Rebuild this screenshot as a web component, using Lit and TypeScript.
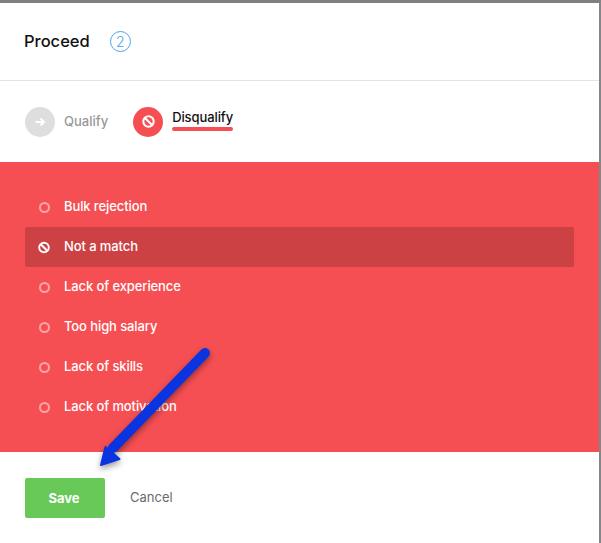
import { LitElement, html, css, svg } from 'lit';
import { customElement } from 'lit/decorators.js';

const REASONS = [
  { label: 'Bulk rejection' },
  { label: 'Not a match', active: true },
  { label: 'Lack of experience' },
  { label: 'Too high salary' },
  { label: 'Lack of skills' },
  { label: 'Lack of motivation' },
];

const banIcon = (size: number) => html`
  <svg width=${size} height=${size} viewBox="0 0 14 14" fill="none" stroke="#fff" stroke-width="2.2">
    <circle cx="7" cy="7" r="5.6"></circle>
    <path d="M3.2 3.2l7.6 7.6"></path>
  </svg>
`;

@customElement('app-root')
export class AppRoot extends LitElement {
  static styles = css`
    :host {
      display: block;
      position: relative;
      width: 601px;
      height: 543px;
      overflow: hidden;
      background: #fff;
      font-family: 'Inter', 'Noto Sans', sans-serif;
      -webkit-font-smoothing: antialiased;
    }
    .dialog {
      width: 601px;
      height: 543px;
      box-sizing: border-box;
      border-top: 3px solid #7f7f7f;
      border-right: 2px solid #85868a;
      display: flex;
      flex-direction: column;
    }
    .head {
      height: 78px;
      flex: none;
      box-sizing: border-box;
      border-bottom: 1px solid #e4e4e4;
      padding: 0 24px;
      display: flex;
      align-items: center;
      gap: 20px;
    }
    .title {
      font-size: 16.5px;
      font-weight: 500;
      color: #111;
      padding-bottom: 2px;
    }
    .count {
      width: 21px;
      height: 21px;
      box-sizing: border-box;
      border: 1px solid #4aa3f0;
      border-radius: 50%;
      color: #4aa3f0;
      font-size: 14px;
      font-weight: 300;
      display: flex;
      align-items: center;
      justify-content: center;
    }
    .tabs {
      height: 81px;
      flex: none;
      box-sizing: border-box;
      padding: 0 25px;
      display: flex;
      align-items: center;
      gap: 25px;
    }
    .tab {
      display: flex;
      align-items: center;
      gap: 9px;
      font-size: 13px;
      font-weight: 500;
    }
    .badge {
      width: 30px;
      height: 30px;
      border-radius: 50%;
      display: flex;
      align-items: center;
      justify-content: center;
    }
    .tab.off { color: #999; }
    .tab.off .badge { background: #dedede; }
    .tab.off .name { padding-bottom: 2px; }
    .tab.on { color: #111; }
    .tab.on .badge { background: #f64f53; }
    .tab.on .name {
      position: relative;
      margin-top: -3px;
      padding-bottom: 6px;
      letter-spacing: -0.1px;
    }
    .tab.on .name::after {
      content: '';
      position: absolute;
      left: 0;
      right: 0;
      bottom: 0;
      height: 4px;
      border-radius: 2px;
      background: #f64f53;
    }
    .reasons {
      height: 290px;
      flex: none;
      box-sizing: border-box;
      background: #f64f53;
      padding: 25px 25px 0;
      display: flex;
      flex-direction: column;
    }
    .reason {
      height: 40px;
      flex: none;
      padding-left: 13px;
      display: flex;
      align-items: center;
      gap: 14px;
      color: #fff;
      font-size: 13px;
      font-weight: 500;
      letter-spacing: -0.1px;
      border-radius: 2px;
    }
    .reason.active { background: #cc4244; }
    .label { padding-bottom: 2px; }
    .mark {
      width: 12px;
      display: flex;
      justify-content: center;
    }
    .dot {
      width: 11px;
      height: 11px;
      flex: none;
      box-sizing: border-box;
      border: 2px solid #fba6a8;
      border-radius: 50%;
    }
    .foot {
      flex: 1;
      padding: 26px 25px 0;
      display: flex;
      align-items: flex-start;
      gap: 25px;
    }
    .save {
      width: 80px;
      height: 40px;
      border: none;
      border-radius: 2px;
      padding: 0 2px 0 0;
      background: #68c959;
      color: #fff;
      font: 700 13px 'Inter', 'Noto Sans', sans-serif;
    }
    .cancel {
      height: 37px;
      display: flex;
      align-items: center;
      color: #6b6b6b;
      font-size: 13px;
    }
    .arrow {
      position: absolute;
      left: 90px;
      top: 340px;
      filter: drop-shadow(0 3px 3px rgba(0, 0, 0, 0.4));
    }
  `;

  render() {
    return html`
      <div class="dialog">
        <div class="head">
          <span class="title">Proceed</span>
          <span class="count">2</span>
        </div>
        <div class="tabs">
          <div class="tab off">
            <span class="badge">
              <svg width="14" height="14" viewBox="0 0 14 14" fill="none" stroke="#fff" stroke-width="2">
                <path d="M2.5 7h8.5M7.5 3.5L11 7l-3.5 3.5"></path>
              </svg>
            </span>
            <span class="name">Qualify</span>
          </div>
          <div class="tab on">
            <span class="badge">${banIcon(13)}</span>
            <span class="name">Disqualify</span>
          </div>
        </div>
        <div class="reasons">
          ${REASONS.map(r => html`
            <div class="reason ${r.active ? 'active' : ''}">
              <span class="mark">${r.active ? banIcon(13) : html`<span class="dot"></span>`}</span>
              <span class="label">${r.label}</span>
            </div>
          `)}
        </div>
        <div class="foot">
          <button class="save">Save</button>
          <span class="cancel">Cancel</span>
        </div>
      </div>
      <svg class="arrow" width="130" height="140" viewBox="90 340 130 140">
        ${svg`<path d="M205 353 L113 448" stroke="#0a34e0" stroke-width="10" stroke-linecap="round" fill="none"></path>
        <path d="M105.5 447 L101 465 L119.5 459 Z" fill="#0a34e0" stroke="#0a34e0" stroke-width="2" stroke-linejoin="round"></path>`}
      </svg>
    `;
  }
}
